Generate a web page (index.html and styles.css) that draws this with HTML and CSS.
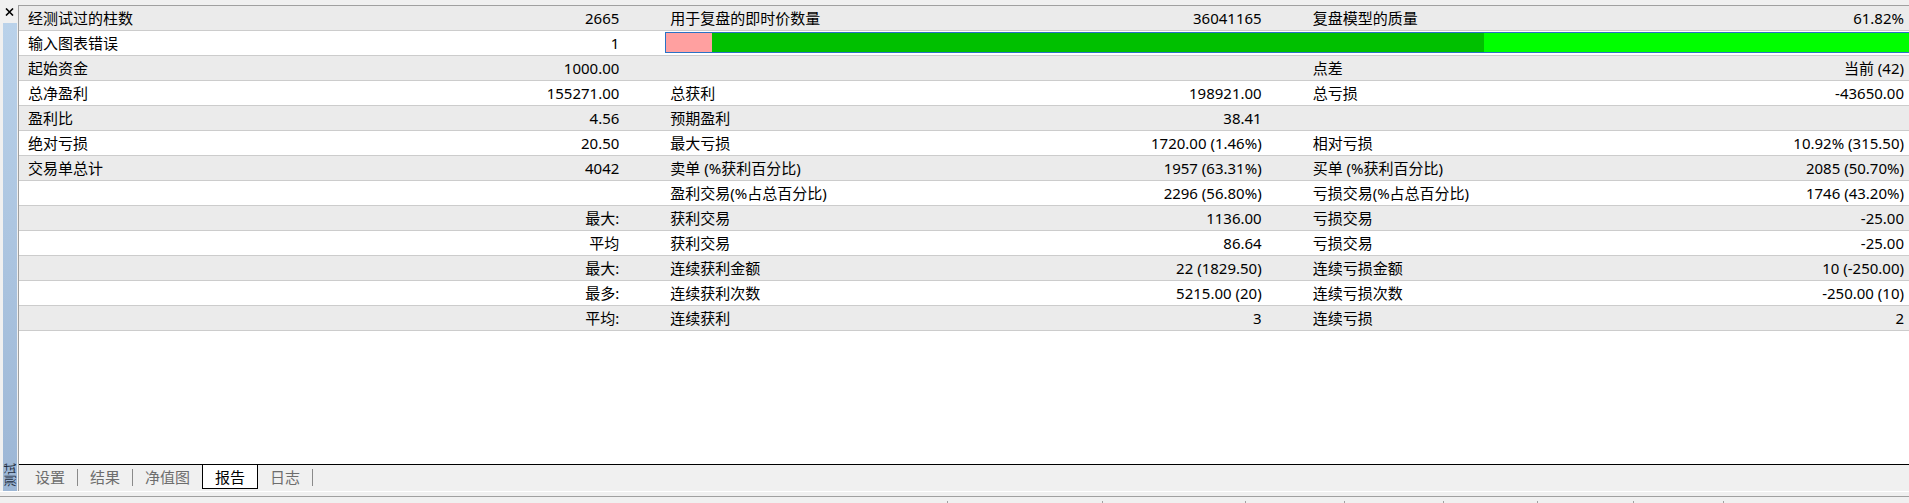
FILE: index.html
```html
<!DOCTYPE html>
<html lang="zh-CN">
<head>
  <meta charset="UTF-8" />
  <title>测试 - 报告</title>
  <link rel="stylesheet" href="styles.css">
</head>
<body>

  <div class="window">
    <!-- dock strip with close button and vertical caption -->
    <div class="side">
      <div class="close">
        <svg width="9" height="8" viewBox="0 0 9 8"><path d="M1 0.5 L8 7.5 M8 0.5 L1 7.5" stroke="#000" stroke-width="1.6"/></svg>
      </div>
      <div class="side-bar"><span class="side-title">测试</span></div>
    </div>

    <div class="main">
      <div class="report">
        <div class="row">
          <div class="cell"><span>经测试过的柱数</span><span>2665</span></div>
          <div class="cell"><span>用于复盘的即时价数量</span><span>36041165</span></div>
          <div class="cell"><span>复盘模型的质量</span><span>61.82%</span></div>
        </div>
        <div class="row">
          <div class="cell"><span>输入图表错误</span><span>1</span></div>
          <div class="progress">
            <span class="bad" style="width: 3.7%"></span>
            <span class="mid" style="width: 62.1%"></span>
            <span class="good"></span>
          </div>
        </div>
        <div class="row">
          <div class="cell"><span>起始资金</span><span>1000.00</span></div>
          <div class="cell"></div>
          <div class="cell"><span>点差</span><span>当前 (42)</span></div>
        </div>
        <div class="row">
          <div class="cell"><span>总净盈利</span><span>155271.00</span></div>
          <div class="cell"><span>总获利</span><span>198921.00</span></div>
          <div class="cell"><span>总亏损</span><span>-43650.00</span></div>
        </div>
        <div class="row">
          <div class="cell"><span>盈利比</span><span>4.56</span></div>
          <div class="cell"><span>预期盈利</span><span>38.41</span></div>
          <div class="cell"></div>
        </div>
        <div class="row">
          <div class="cell"><span>绝对亏损</span><span>20.50</span></div>
          <div class="cell"><span>最大亏损</span><span>1720.00 (1.46%)</span></div>
          <div class="cell"><span>相对亏损</span><span>10.92% (315.50)</span></div>
        </div>
        <div class="row">
          <div class="cell"><span>交易单总计</span><span>4042</span></div>
          <div class="cell"><span>卖单 (%获利百分比)</span><span>1957 (63.31%)</span></div>
          <div class="cell"><span>买单 (%获利百分比)</span><span>2085 (50.70%)</span></div>
        </div>
        <div class="row">
          <div class="cell"></div>
          <div class="cell"><span>盈利交易(%占总百分比)</span><span>2296 (56.80%)</span></div>
          <div class="cell"><span>亏损交易(%占总百分比)</span><span>1746 (43.20%)</span></div>
        </div>
        <div class="row">
          <div class="cell"><span></span><span>最大:</span></div>
          <div class="cell"><span>获利交易</span><span>1136.00</span></div>
          <div class="cell"><span>亏损交易</span><span>-25.00</span></div>
        </div>
        <div class="row">
          <div class="cell"><span></span><span>平均</span></div>
          <div class="cell"><span>获利交易</span><span>86.64</span></div>
          <div class="cell"><span>亏损交易</span><span>-25.00</span></div>
        </div>
        <div class="row">
          <div class="cell"><span></span><span>最大:</span></div>
          <div class="cell"><span>连续获利金额</span><span>22 (1829.50)</span></div>
          <div class="cell"><span>连续亏损金额</span><span>10 (-250.00)</span></div>
        </div>
        <div class="row">
          <div class="cell"><span></span><span>最多:</span></div>
          <div class="cell"><span>连续获利次数</span><span>5215.00 (20)</span></div>
          <div class="cell"><span>连续亏损次数</span><span>-250.00 (10)</span></div>
        </div>
        <div class="row">
          <div class="cell"><span></span><span>平均:</span></div>
          <div class="cell"><span>连续获利</span><span>3</span></div>
          <div class="cell"><span>连续亏损</span><span>2</span></div>
        </div>
      </div>

      <div class="tabs">
        <span class="tab">设置</span>
        <span class="sep"></span>
        <span class="tab">结果</span>
        <span class="sep"></span>
        <span class="tab">净值图</span>
        <span class="tab active">报告</span>
        <span class="tab">日志</span>
        <span class="sep"></span>
      </div>
    </div>
  </div>

  <div class="divider"></div>

  <div class="status">
    <span></span><span></span><span></span><span></span><span></span>
    <span></span><span></span><span></span><span></span>
  </div>

</body>
</html>
```

FILE: styles.css
```css
* {
  box-sizing: border-box;
}

body {
  margin: 0;
  height: 503px;
  overflow: hidden;
  background-color: #f0f0f0;
  color: #000;
  font-family: "Noto Sans", "Noto Sans CJK SC", sans-serif;
  font-size: 15px;
}

.window {
  display: flex;
  height: 491px;
}

/* left dock strip */
.side {
  width: 18px;
  display: flex;
  flex-direction: column;
}

.close {
  height: 23px;
  padding: 8px 0 0 5px;
}

.close svg {
  display: block;
}

.side-bar {
  flex: 1;
  width: 14px;
  margin-left: 3px;
  background: linear-gradient(#bad2ea, #9cb6d5);
  display: flex;
  align-items: flex-end;
  justify-content: center;
}

.side-title {
  writing-mode: vertical-rl;
  text-orientation: sideways;
  transform: rotate(180deg);
  font-family: "Noto Sans CJK SC", sans-serif;
  font-size: 12px;
  line-height: 14px;
  margin-bottom: 4px;
  color: #1b2a3c;
}

.main {
  flex: 1;
  min-width: 0;
  margin-top: 5px;
  border-top: 1px solid #a0a0a0;
  border-left: 1px solid #a0a0a0;
  display: flex;
  flex-direction: column;
}

/* report table */
.report {
  flex: 1;
  background-color: #fff;
  border-bottom: 1px solid #000;
}

.row {
  display: grid;
  grid-template-columns: repeat(3, 1fr);
  column-gap: 37px;
  height: 25px;
  border-bottom: 1px solid #cccccc;
}

.row:nth-child(odd) {
  background-color: #ebebeb;
}

.cell {
  display: flex;
  justify-content: space-between;
  align-items: center;
  padding: 0 5px 0 9px;
  line-height: 24px;
  white-space: nowrap;
}

.progress {
  grid-column: 2 / 4;
  display: flex;
  margin: 1px 0 2px 4px;
  border: 1px solid #2a72c6;
  border-right: none;
}

.progress .bad {
  background-color: #ffa0a0;
}

.progress .mid {
  background-color: #00c000;
}

.progress .good {
  flex: 1;
  background-color: #00ff00;
}

/* bottom tabs */
.tabs {
  height: 26px;
  display: flex;
  align-items: flex-start;
  padding-left: 4px;
}

.tab {
  height: 23px;
  padding: 0 12px;
  display: flex;
  align-items: center;
  color: #6d6d6d;
}

.tab.active {
  height: 24px;
  color: #000;
  background-color: #fff;
  border: 1px solid #000;
  border-top: none;
}

.sep {
  width: 1px;
  height: 17px;
  margin-top: 4px;
  background-color: #8a8a8a;
}

.divider {
  height: 6px;
  border-top: 1px solid #fff;
  border-bottom: 1px solid #a0a0a0;
}

/* status bar */
.status {
  display: grid;
  grid-template-columns: 947px 155px 143px 99px 99px 94px 96px 90px 1fr;
  height: 20px;
}

.status span {
  margin-top: 4px;
  border-left: 1px solid #a0a0a0;
}

.status span:first-child {
  border-left: none;
}
```
